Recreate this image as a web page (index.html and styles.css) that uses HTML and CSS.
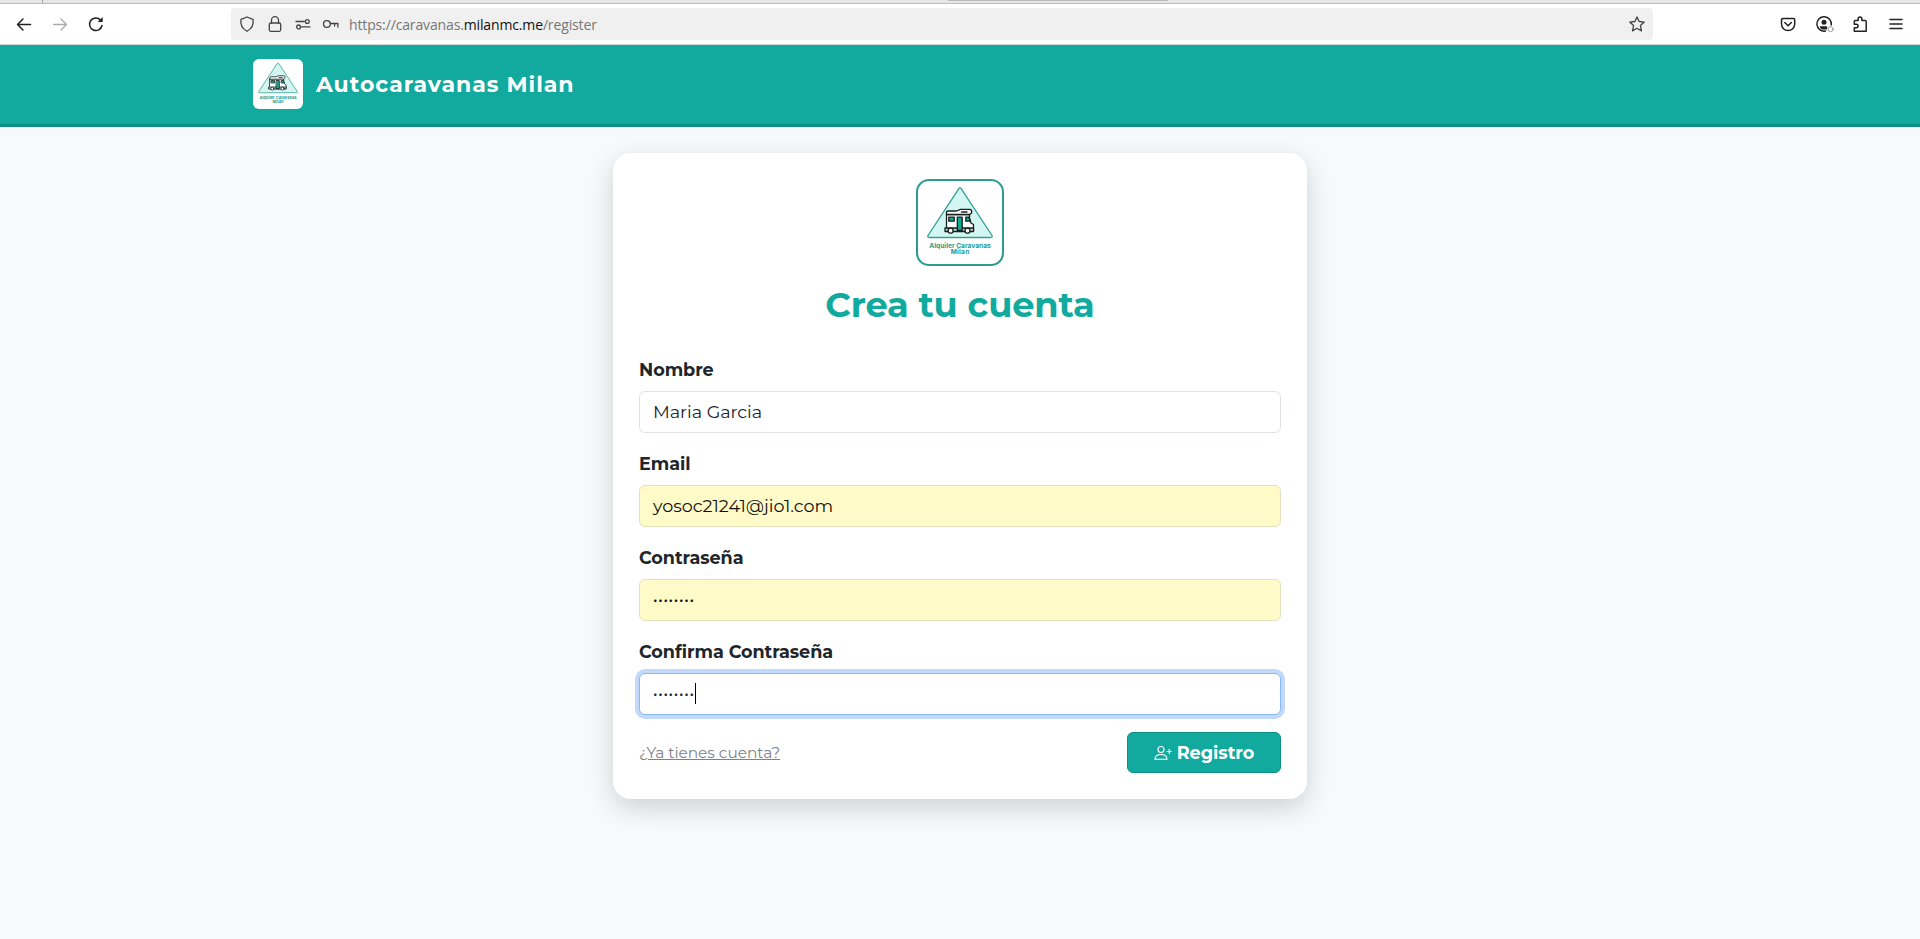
FILE: index.html
```
<!DOCTYPE html>
<html lang="es">
<head>
<meta charset="utf-8">
<title>Autocaravanas Milan</title>
<link rel="stylesheet" href="styles.css">
</head>
<body>
<div class="tabstrip"><span class="tab-edge"></span><span class="tab-active"></span></div>
<div class="toolbar">
  <div class="nav">
    <svg class="ic strong" viewBox="0 0 16 16"><path d="M14.500 8.500H1.500M7 3 1.500 8.500 7 14"/></svg>
    <svg class="ic faded" viewBox="0 0 16 16"><path d="M1.500 8.500h13M9 3l5.500 5.500L9 14"/></svg>
    <svg class="ic strong" viewBox="0 0 16 16"><path d="M14 9.500A6.300 6.300 0 1 1 12.500 4"/><path d="M14.700 1v5h-5z" fill="#222" stroke="none"/></svg>
  </div>
  <div class="urlbar">
    <svg class="ic" viewBox="0 0 16 16"><path d="M8 1l6 2.300c.8 4.700-.7 9-6 12-5.300-3-6.800-7.300-6-12z"/></svg>
    <svg class="ic" viewBox="0 0 16 16"><rect x="2.300" y="7" width="11.400" height="8.300" rx="1.500"/><path d="M4.500 7V4.200a3.500 3.500 0 0 1 7 0V7"/></svg>
    <svg class="ic" viewBox="0 0 16 16"><path d="M1 5.500h8.300M6.500 10.900H15"/><circle cx="12.300" cy="5.500" r="1.900"/><circle cx="3.600" cy="10.900" r="1.900"/></svg>
    <svg class="ic" viewBox="0 0 16 16"><circle cx="3.900" cy="8" r="3.400"/><path d="M7.400 7.500h7.500v3.500M11.600 7.500v2.500"/></svg>
    <span class="url">https://caravanas.<b>milanmc.me</b>/register</span>
    <svg class="ic star" viewBox="0 0 16 16"><path d="M8 .9l2.100 4.600 5.200.6-3.900 3.500 1.100 5.300L8 12.300l-4.500 2.600 1.100-5.300L.7 6.100l5.200-.6z"/></svg>
  </div>
  <div class="actions">
    <svg class="ic strong" viewBox="0 0 16 16"><path d="M3 2.500h10.500q1.200 0 1.200 1.200V8a6.600 6.600 0 0 1-13.200 0V3.700Q1.500 2.500 3 2.500zM4.800 6.500 8.100 9.700l3.300-3.200"/></svg>
    <svg class="ic strong" viewBox="0 0 16 16"><path d="M9.500 15A7.200 7.200 0 1 1 15.200 9"/><circle cx="8" cy="6.200" r="2.500" fill="#222" stroke="none"/><path d="M3.600 10.200h7.500v3.300H6q-2-.8-2.400-3.300z" fill="#222" stroke="none"/><circle cx="14.600" cy="13.200" r="2.500" stroke="#999" stroke-width="1" fill="#fff"/></svg>
    <svg class="ic strong" viewBox="0 0 16 16"><path d="M2.300 5.300q0-.8.800-.8h3V3a1.900 1.900 0 0 1 3.800 0v1.500h3.300q1 0 1 1v9.700H2.300v-3.500h2a1.700 1.700 0 0 0 0-3.500h-2z"/></svg>
    <svg class="ic strong" viewBox="0 0 16 16"><path d="M2 3.500h12M2 8h12M2 12.500h12"/></svg>
  </div>
</div>

<header class="site-header">
  <svg class="brand-logo" viewBox="2.400 2.400 83.200 83.200"><use href="#logo"/></svg>
  <span class="brand">Autocaravanas Milan</span>
</header>

<main class="page">
  <form class="card">
    <div class="card-logo">
      <svg viewBox="2 2 84 84">
        <g id="logo">
          <path d="M42.700 9.800q1.300-1.900 2.600 0l30.700 46.700q1 2-1.400 2H13.400q-2.400 0-1.400-2z" fill="#d3f6f3" stroke="#2ea193" stroke-width="1.300"/>
          <g stroke="#17201f" stroke-width="1.300" stroke-linejoin="round" stroke-linecap="round">
            <path d="M30.500 35.500H53.500v3.500l1.500 5 2.500 1.500V52H30.500z" fill="#fff"/>
            <path d="M30.500 35.500v-2q0-1.500 1.500-1.500h8.500l4-1.700h9q2.300 0 2.300 2.300 0 2.400-2.300 2.900z" fill="#fff"/>
            <path d="M45.500 33h5.500"/>
            <path d="M29 49h28.500v3.500H29z" fill="#b7ddd0"/>
            <path d="M32.800 38.200h5.400v4H32.800zM41.300 38.200h4.900v13.300h-4.900z" fill="#12a594"/>
            <path d="M49.800 38.200h3.200l1.200 4h-4.400z" fill="#12a594"/>
            <circle cx="34.600" cy="51.700" r="2.500" fill="#fff"/><circle cx="51.500" cy="51.700" r="2.500" fill="#fff"/>
          </g>
          <text x="44" y="69.100" textLength="61.500" class="logo-text">Alquiler Caravanas</text>
          <text x="44" y="75.200" textLength="18.500" class="logo-text">Milan</text>
        </g>
      </svg>
    </div>
    <h1>Crea tu cuenta</h1>
    <div class="field"><label>Nombre</label><div class="input">Maria Garcia</div></div>
    <div class="field"><label>Email</label><div class="input filled">yosoc21241@jio1.com</div></div>
    <div class="field"><label>Contraseña</label><div class="input filled"><span class="dots">••••••••</span></div></div>
    <div class="field"><label>Confirma Contraseña</label><div class="input focus"><span class="dots">••••••••</span><span class="caret"></span></div></div>
    <div class="footer">
      <a class="login">¿Ya tienes cuenta?</a>
      <div class="btn">
        <svg viewBox="0 0 18 16"><circle cx="7" cy="4.500" r="3"/><path d="M1 14.200c0-3 2.500-4.700 6-4.700s6 1.700 6 4.700zM15.200 4v5M12.700 6.500h5"/></svg>
        <span>Registro</span>
      </div>
    </div>
  </form>
</main>
</body>
</html>
```
FILE: styles.css
```
* { box-sizing: border-box; }
body {
  margin: 0;
  height: 939px;
  overflow: hidden;
  background: #f7fafd;
  color: #212529;
  font-family: Montserrat, Inter, "Open Sans", sans-serif;
  font-size: 17.6px;
}
.logo-text {
  font: 700 6.6px Inter, sans-serif;
  fill: #2a9d8f;
  text-anchor: middle;
}

.tabstrip {
  height: 4px;
  display: flex;
  background: #e6e6e6;
  border-bottom: 1px solid #bdbdbd;
}
.tab-edge { width: 43px; border-right: 1px solid #aaa; }
.tab-active { width: 220px; height: 1px; margin-left: 905px; background: #bbb; }

.toolbar {
  height: 41px;
  display: flex;
  align-items: center;
  background: #fff;
  border-bottom: 1px solid #d6d6d6;
}
.ic {
  width: 16px;
  height: 16px;
  flex: none;
  overflow: visible;
  fill: none;
  stroke: #444;
  stroke-width: 1.3;
  stroke-linejoin: round;
  stroke-linecap: round;
}
.strong { stroke: #222; stroke-width: 1.5; }
.faded { stroke: #aaa; }
.nav { width: 231px; padding-left: 16px; display: flex; gap: 20px; }
.urlbar {
  width: 1422px;
  height: 32px;
  padding: 0 8px;
  display: flex;
  align-items: center;
  gap: 12px;
  background: #f0f0f0;
  border-radius: 4px;
}
.url {
  margin-left: -2px;
  font: 14px "Open Sans", sans-serif;
  letter-spacing: -0.14px;
  color: #777;
}
.url b { font-weight: 400; color: #111; }
.star { margin-left: auto; }
.actions { margin-left: 127px; display: flex; gap: 20px; }

.site-header {
  height: 82px;
  padding: 0 253px 1px;
  display: flex;
  align-items: center;
  gap: 13px;
  background: #12aa9e;
  border-bottom: 3px solid #0e8f83;
}
.brand-logo { width: 50px; height: 50px; background: #fff; border-radius: 6px; }
.brand { color: #fff; font-size: 22px; font-weight: 700; letter-spacing: 0.98px; }

.page { padding-top: 26px; display: flex; justify-content: center; }
.card {
  width: 694px;
  height: 646px;
  padding: 26px;
  background: #fff;
  border-radius: 18px;
  box-shadow: 0 9px 26px rgba(0, 0, 0, .16);
}
.card-logo {
  width: 88px;
  height: 87px;
  margin: 0 auto;
  border: 2px solid #2a9d8f;
  border-radius: 13px;
}
.card-logo svg { display: block; width: 84px; height: 84px; }
h1 {
  margin: 18px 0 31px;
  line-height: 42px;
  text-align: center;
  color: #12aa9e;
  font-size: 35.2px;
  font-weight: 700;
  letter-spacing: -0.12px;
}
.field { height: 94px; }
.field label {
  display: block;
  height: 34px;
  line-height: 26px;
  font-weight: 700;
  letter-spacing: -0.05px;
}
.input {
  height: 41.5px;
  padding: 0 13px;
  display: flex;
  align-items: center;
  background: #fff;
  border: 1px solid #dee2e6;
  border-radius: 6px;
  letter-spacing: -0.03px;
}
.filled { background: #fffbc8; border-color: #e2e0bd; color: #111; }
.focus { border-color: #86b7fe; box-shadow: 0 0 0 4px #c2d9fb; }
.dots { margin-top: 1px; font: 8px Inter, sans-serif; letter-spacing: 0.7px; }
.caret { width: 1px; height: 21px; margin-top: -1px; background: #000; }
.footer { margin-top: -1px; display: flex; align-items: center; justify-content: space-between; }
.login { color: #7b8288; font-size: 15.4px; letter-spacing: -0.05px; text-decoration: underline; }
.btn {
  width: 154px;
  height: 41px;
  display: flex;
  align-items: center;
  justify-content: center;
  gap: 5px;
  background: #12aa9e;
  border: 1px solid #0e8f83;
  border-radius: 6px;
  color: #fff;
  font-weight: 700;
}
.btn svg { width: 18px; height: 16px; fill: none; stroke: #fff; stroke-width: 1.1; }
```
